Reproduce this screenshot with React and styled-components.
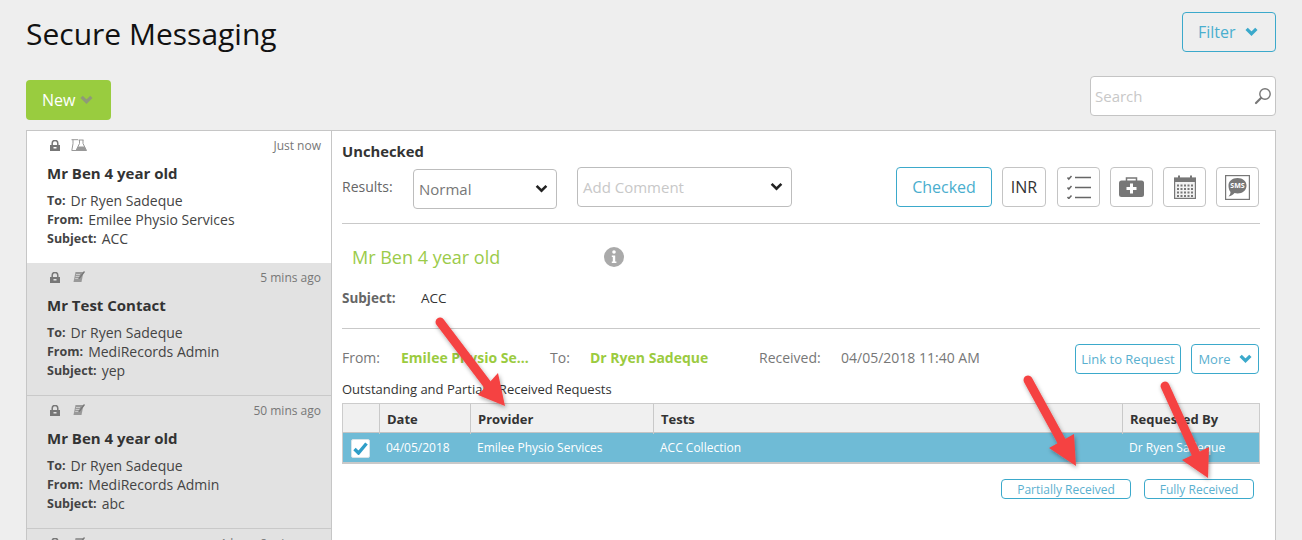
import React from "react";
import styled, { createGlobalStyle } from "styled-components";

const Global = createGlobalStyle`
  html, body { margin: 0; padding: 0; background: #eeeeee; }
  body { font-family: "Open Sans", "Liberation Sans", sans-serif; color: #333; }
  * { box-sizing: border-box; }
`;

const Page = styled.div`
  position: relative;
  width: 1302px;
  height: 540px;
  overflow: hidden;
  padding: 12px 26px 0;
`;
const TopRow = styled.div`
  display: flex;
  justify-content: space-between;
  height: 40px;
`;
const Title = styled.h1`
  margin: 0;
  font-size: 30px;
  line-height: 44px;
  font-weight: 400;
  color: #111;
`;
const Toolbar = styled.div`
  display: flex;
  justify-content: space-between;
  align-items: flex-start;
  margin-top: 24px;
  height: 54px;
`;
const NewButton = styled.div`
  width: 85px;
  height: 40px;
  margin-top: 4px;
  background: #99cc3f;
  border-radius: 4px;
  color: #fff;
  font-size: 16px;
  display: flex;
  align-items: center;
  padding-left: 16px;
  gap: 5px;
`;
const FilterButton = styled.div`
  width: 94px;
  height: 40px;
  border: 1px solid #3ba9cb;
  border-radius: 4px;
  color: #4aaece;
  font-size: 16px;
  display: flex;
  align-items: center;
  padding-left: 15px;
  gap: 9px;
`;
const SearchBox = styled.div`
  width: 186px;
  height: 40px;
  background: #fff;
  border: 1px solid #c4c4c4;
  border-radius: 4px;
  color: #c8c8c8;
  font-size: 15px;
  display: flex;
  align-items: center;
  justify-content: space-between;
  padding: 0 3px 0 4px;
`;
const Panel = styled.div`
  display: flex;
  height: 420px;
  background: #fff;
  border: 1px solid #c6c6c6;
  border-bottom: 0;
`;
const List = styled.div`
  width: 305px;
  flex: none;
  border-right: 1px solid #c6c6c6;
  background: #e2e2e2;
`;
const Item = styled.div`
  height: ${p => (p.$first ? 132 : 133)}px;
  background: ${p => (p.$active ? "#fff" : "#e2e2e2")};
  border-bottom: ${p => (p.$active ? "0" : "1px solid #c9c9c9")};
  padding: 0 10px 0 20px;
`;
const ItemTop = styled.div`
  display: flex;
  align-items: center;
  height: 28px;
  padding-left: 3px;
  gap: 11px;
`;
const Time = styled.span`
  margin-left: auto;
  font-size: 12px;
  color: #777;
`;
const ItemName = styled.div`
  font-size: 15px;
  font-weight: 700;
  color: #333;
  line-height: 20px;
  margin: 4px 0 8px;
`;
const MetaRow = styled.div`
  font-size: 14px;
  line-height: 19px;
  color: #444;
  display: flex;
  gap: 5px;
`;
const MetaKey = styled.b`
  font-size: 12.5px;
  font-weight: 700;
  color: #444;
`;
const Detail = styled.div`
  flex: 1;
  min-width: 0;
  padding: 0 15px 0 10px;
`;
const DetailHead = styled.div`
  font-size: 14.8px;
  font-weight: 700;
  color: #333;
  line-height: 20px;
  padding-top: 10px;
`;
const ControlRow = styled.div`
  display: flex;
  align-items: flex-start;
  margin-top: 6px;
  height: 57px;
  border-bottom: 1px solid #c9c9c9;
`;
const ResultsLabel = styled.span`
  font-size: 14px;
  color: #666;
  line-height: 39px;
  width: 71px;
`;
const Select = styled.div`
  width: ${p => p.$w}px;
  height: 40px;
  margin-top: ${p => p.$mt || 0}px;
  margin-right: ${p => p.$mr || 0}px;
  border: 1px solid #bdbdbd;
  border-radius: 4px;
  background: #fff;
  color: ${p => (p.$placeholder ? "#c8c8c8" : "#777")};
  font-size: 15px;
  display: flex;
  align-items: center;
  justify-content: space-between;
  padding: 0 8px 1px 5px;
`;
const Actions = styled.div`
  margin-left: auto;
  display: flex;
  gap: 10px;
  margin-right: 1px;
`;
const CheckedButton = styled.div`
  width: 96px;
  height: 40px;
  border: 1px solid #3ba9cb;
  border-radius: 4px;
  color: #4aaece;
  font-size: 16px;
  display: flex;
  align-items: center;
  justify-content: center;
`;
const IconButton = styled.div`
  width: ${p => p.$w || 43}px;
  height: 40px;
  margin-right: ${p => p.$mr || 0}px;
  border: 1px solid #c4c4c4;
  border-radius: 4px;
  color: #333;
  font-size: 16px;
  display: flex;
  align-items: center;
  justify-content: center;
`;
const PatientRow = styled.div`
  display: flex;
  align-items: center;
  height: 66px;
  padding-left: 10px;
`;
const PatientName = styled.div`
  width: 252px;
  font-size: 18px;
  color: #9bcb4a;
`;
const SubjectRow = styled.div`
  display: flex;
  height: 39px;
  border-bottom: 1px solid #c9c9c9;
  font-size: 13.5px;
  line-height: 17px;
`;
const SubjectKey = styled.b`
  width: 79px;
  color: #666;
`;
const SubjectValue = styled.span`
  color: #333;
`;
const InfoRow = styled.div`
  display: flex;
  align-items: center;
  height: 30px;
  margin-top: 15px;
  font-size: 14px;
  line-height: 18px;
  color: #777;
`;
const InfoLabel = styled.span`
  width: ${p => p.$w}px;
  flex: none;
  margin-top: -2px;
`;
const InfoName = styled.b`
  width: ${p => p.$w}px;
  flex: none;
  margin-top: -2px;
  color: #9bcb3f;
  font-weight: 700;
`;
const OutlineButton = styled.div`
  height: 30px;
  flex: none;
  margin-left: ${p => p.$ml || 0}px;
  width: ${p => p.$w}px;
  border: 1px solid #3ba9cb;
  border-radius: 4px;
  color: #5ab0cf;
  font-size: 13px;
  display: flex;
  align-items: center;
  justify-content: center;
  gap: 8px;
`;
const TableCaption = styled.div`
  font-size: 13px;
  color: #333;
  line-height: 17px;
  margin-top: 7px;
`;
const Table = styled.div`
  margin-top: 5px;
  border: 1px solid #cccccc;
  border-bottom: 2px solid #c9c9c9;
`;
const Grid = styled.div`
  display: grid;
  grid-template-columns: 37px 91px 183px 469px 1fr;
  align-items: stretch;
`;
const HeadRow = styled(Grid)`
  height: 29px;
  background: #f0f0f0;
  border-bottom: 1px solid #c4c4c4;
`;
const HeadCell = styled.div`
  font-size: 13px;
  font-weight: 700;
  color: #333;
  padding-left: 7px;
  line-height: 30px;
  border-right: ${p => (p.$last ? "0" : "1px solid #c9c9c9")};
`;
const BodyRow = styled(Grid)`
  height: 29px;
  background: #6fbbd6;
`;
const BodyCell = styled.div`
  font-size: 12px;
  color: #fff;
  padding-left: 6px;
  line-height: 30px;
`;
const CheckCell = styled.div`
  padding: 6px 0 0 8px;
`;
const CheckBox = styled.div`
  width: 19px;
  height: 19px;
  background: #fff;
  border: 1px solid #d8e4e8;
  border-radius: 2px;
  display: flex;
  align-items: center;
  justify-content: center;
`;
const FooterActions = styled.div`
  display: flex;
  justify-content: flex-end;
  gap: 13px;
  margin-top: 15px;
  padding-right: 6px;
`;
const SmallButton = styled.div`
  width: ${p => p.$w}px;
  height: 20px;
  border: 1px solid #3ba9cb;
  border-radius: 4px;
  color: #5ab0cf;
  font-size: 12px;
  display: flex;
  align-items: center;
  justify-content: center;
`;
const ArrowLayer = styled.svg`
  position: absolute;
  left: 0;
  top: 0;
  pointer-events: none;
`;

const Chevron = ({ color, w = 13, sw = 3 }) => (
  <svg width={w} height={w * 0.7} viewBox="0 0 12 8">
    <path d="M1.5 1.5 L6 6 L10.5 1.5" fill="none" stroke={color} strokeWidth={sw} />
  </svg>
);
const Lock = () => (
  <svg width="10" height="11" viewBox="0 0 10 11">
    <path d="M2.2 5V3.2a2.8 2.8 0 0 1 5.600 0V5" fill="none" stroke="#777" strokeWidth="1.500" />
    <path fillRule="evenodd" d="M0 5h10v6H0z M3.500 7v1.500h3V7z" fill="#777" />
  </svg>
);
const Flask = () => (
  <svg width="16" height="12" viewBox="0 0 16 12">
    <path d="M0.500 0.700h6.500M2 0.700v4L0.800 11.500h4.500" fill="none" stroke="#999" />
    <path d="M7.500 1h5M8.500 1v3.500L5 11.500h10.500L12 4.500V1" fill="#fff" stroke="#999" />
    <path d="M7 7.500h6.500l2 4H5z" fill="#999" />
  </svg>
);
const Note = () => (
  <svg width="14" height="12" viewBox="0 0 14 12">
    <path d="M4.500 1h8L10.500 11H2.500z" fill="#999" />
    <path d="M5 3.500h4M4.600 5.500h4M4.200 7.500h3" stroke="#d6d6d6" strokeWidth=".8" />
    <path d="M13.500 0.500L8 7.500" stroke="#777" strokeWidth="1.300" />
  </svg>
);
const Search = () => (
  <svg width="18" height="18" viewBox="0 0 18 18">
    <circle cx="11" cy="7" r="5.200" fill="none" stroke="#777" strokeWidth="1.400" />
    <path d="M7 11L2 16" stroke="#777" strokeWidth="2.200" strokeLinecap="round" />
  </svg>
);
const Tasks = () => (
  <svg width="26" height="24" viewBox="0 0 26 24">
    <g fill="none" stroke="#666">
      <path d="M1.500 2.500l1.300 1.500 2.700-3M1.500 12.500l1.300 1.500 2.700-3M1.500 22l1.300 1.500 2.700-3" strokeWidth="1.500" />
      <path d="M9 2.500h16M9 12.500h16M9 22.500h16" strokeWidth="1.500" />
    </g>
  </svg>
);
const Kit = () => (
  <svg width="25" height="20" viewBox="0 0 25 20">
    <path d="M7.500 4V1h10v3" fill="none" stroke="#777" strokeWidth="1.500" />
    <rect x="0" y="3.500" width="25" height="16.500" rx="2.500" fill="#777" />
    <path d="M11 6.500h3v3.500h3.500v3H14v3.500h-3V13H7.500v-3H11z" fill="#fff" />
  </svg>
);
const Calendar = () => (
  <svg width="22" height="24" viewBox="0 0 22 24">
    <rect x="0.600" y="3" width="20.800" height="20.400" fill="#f2f2f2" stroke="#777" strokeWidth="1.200" />
    <rect x="0.600" y="3" width="20.800" height="4" fill="#777" />
    <path d="M5 0.500v5M17 0.500v5" stroke="#777" strokeWidth="2" />
    <g fill="#777">
      {[9.5, 13, 16.5, 20].map(y =>
        [3, 6.500, 10, 13.500, 17].map(x => <rect key={`${x}-${y}`} x={x} y={y} width="2" height="2" />)
      )}
    </g>
  </svg>
);
const Sms = () => (
  <svg width="25" height="25" viewBox="0 0 25 25">
    <rect x="0.600" y="0.600" width="23.800" height="23.800" fill="#fff" stroke="#777" strokeWidth="1.200" />
    <path d="M12.500 3c5.200 0 9 3.200 9 7.700s-3.800 7.700-9 7.700c-1 0-2-.1-3-.4C8 20 6 21 3.500 21.500c1.200-1.300 2-2.700 2-4.500-1.300-1.500-2-3.800-2-6.300C3.500 6.200 7.300 3 12.500 3z" fill="#777" />
    <text x="12.500" y="13.200" textAnchor="middle" fontSize="7" fontWeight="700" fill="#fff" fontFamily="Open Sans">SMS</text>
  </svg>
);
const Info = () => (
  <svg width="20" height="20" viewBox="0 0 20 20">
    <circle cx="10" cy="10" r="10" fill="#aaa" />
    <circle cx="10" cy="5" r="1.800" fill="#fff" />
    <path d="M7.800 8.500h3.400v6h1.200v1.500H7.800v-1.500h1v-4.500h-1z" fill="#fff" />
  </svg>
);
const Tick = () => (
  <svg width="15" height="13" viewBox="0 0 15 13">
    <path d="M1.500 7l4 4L13.500 1.500" fill="none" stroke="#2f9ec8" strokeWidth="3.400" />
  </svg>
);

const messages = [
  { name: "Mr Ben 4 year old", from: "Emilee Physio Services", subject: "ACC", time: "Just now", active: true, icon: <Flask /> },
  { name: "Mr Test Contact", from: "MediRecords Admin", subject: "yep", time: "5 mins ago", icon: <Note /> },
  { name: "Mr Ben 4 year old", from: "MediRecords Admin", subject: "abc", time: "50 mins ago", icon: <Note /> },
  { time: "1 hour 8 mins ago", icon: <Note /> },
];

const Arrow = ({ shaft, head }) => (
  <g filter="url(#arrowShadow)">
    <path d={shaft} fill="none" stroke="#f54343" strokeWidth="9" strokeLinecap="round" />
    <path d={head} fill="#f54343" />
  </g>
);

export default function App() {
  return (
    <Page>
      <Global />
      <TopRow>
        <Title>Secure Messaging</Title>
        <FilterButton>Filter <Chevron color="#3ba9cb" /></FilterButton>
      </TopRow>
      <Toolbar>
        <NewButton>New <Chevron color="#8f9a78" /></NewButton>
        <SearchBox>Search <Search /></SearchBox>
      </Toolbar>
      <Panel>
        <List>
          {messages.map((m, i) => (
            <Item key={i} $active={m.active} $first={i === 0}>
              <ItemTop>
                <Lock />
                {m.icon}
                <Time>{m.time}</Time>
              </ItemTop>
              {m.name && (
                <>
                  <ItemName>{m.name}</ItemName>
                  <MetaRow><MetaKey>To:</MetaKey> Dr Ryen Sadeque</MetaRow>
                  <MetaRow><MetaKey>From:</MetaKey> {m.from}</MetaRow>
                  <MetaRow><MetaKey>Subject:</MetaKey> {m.subject}</MetaRow>
                </>
              )}
            </Item>
          ))}
        </List>
        <Detail>
          <DetailHead>Unchecked</DetailHead>
          <ControlRow>
            <ResultsLabel>Results:</ResultsLabel>
            <Select $w={144} $mt={2} $mr={20}>Normal <Chevron color="#222" sw={2.4} /></Select>
            <Select $w={215} $placeholder>Add Comment <Chevron color="#222" sw={2.4} /></Select>
            <Actions>
              <CheckedButton>Checked</CheckedButton>
              <IconButton $w={44} $mr={1}>INR</IconButton>
              <IconButton><Tasks /></IconButton>
              <IconButton><Kit /></IconButton>
              <IconButton><Calendar /></IconButton>
              <IconButton><Sms /></IconButton>
            </Actions>
          </ControlRow>
          <PatientRow>
            <PatientName>Mr Ben 4 year old</PatientName>
            <Info />
          </PatientRow>
          <SubjectRow>
            <SubjectKey>Subject:</SubjectKey>
            <SubjectValue>ACC</SubjectValue>
          </SubjectRow>
          <InfoRow>
            <InfoLabel $w={59}>From:</InfoLabel>
            <InfoName $w={149}>Emilee Physio Se...</InfoName>
            <InfoLabel $w={40}>To:</InfoLabel>
            <InfoName $w={169}>Dr Ryen Sadeque</InfoName>
            <InfoLabel $w={82}>Received:</InfoLabel>
            <InfoLabel $w={234}>04/05/2018 11:40 AM</InfoLabel>
            <OutlineButton $w={106}>Link to Request</OutlineButton>
            <OutlineButton $w={68} $ml={10}>More <Chevron color="#3ba9cb" /></OutlineButton>
          </InfoRow>
          <TableCaption>Outstanding and Partially Received Requests</TableCaption>
          <Table>
            <HeadRow>
              <HeadCell />
              <HeadCell>Date</HeadCell>
              <HeadCell>Provider</HeadCell>
              <HeadCell>Tests</HeadCell>
              <HeadCell $last>Requested By</HeadCell>
            </HeadRow>
            <BodyRow>
              <CheckCell><CheckBox><Tick /></CheckBox></CheckCell>
              <BodyCell>04/05/2018</BodyCell>
              <BodyCell>Emilee Physio Services</BodyCell>
              <BodyCell>ACC Collection</BodyCell>
              <BodyCell>Dr Ryen Sadeque</BodyCell>
            </BodyRow>
          </Table>
          <FooterActions>
            <SmallButton $w={130}>Partially Received</SmallButton>
            <SmallButton $w={110}>Fully Received</SmallButton>
          </FooterActions>
        </Detail>
      </Panel>
      <ArrowLayer width="1302" height="540" viewBox="0 0 1302 540">
        <defs>
          <filter id="arrowShadow" x="-30%" y="-30%" width="170%" height="170%">
            <feDropShadow dx="1" dy="2" stdDeviation="2" floodColor="#000" floodOpacity="0.35" />
          </filter>
        </defs>
        <Arrow shaft="M440 322 L487 384" head="M498 373 L505 406 L478 395 Z" />
        <Arrow shaft="M1028 380 L1062 442" head="M1074 434 L1076 466 L1049 448 Z" />
        <Arrow shaft="M1165 386 L1196 454" head="M1209 447 L1208 478 L1182 460 Z" />
      </ArrowLayer>
    </Page>
  );
}
